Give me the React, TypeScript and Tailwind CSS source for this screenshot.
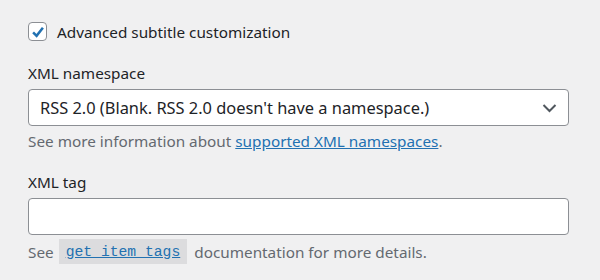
import React from 'react';

const App: React.FC = () => {
    return (
        <div className="w-[600px] h-[280px] bg-[#f0f0f1] px-[28px] pt-[22px] text-[#1d2327] font-['Noto_Sans',sans-serif] text-[15.3px] leading-[20px]">
            {/* checkbox row */}
            <label className="flex items-center gap-[10px] h-[19px]">
                <span className="w-[19px] h-[19px] rounded-[4px] border border-[#8c8f94] bg-white flex items-center justify-center">
                    <svg width="14" height="14" viewBox="0 0 20 20">
                        <path d="M3 10.5 L8 15.5 L17 4" fill="none" stroke="#2271b1" strokeWidth="3.6" />
                    </svg>
                </span>
                <span>Advanced subtitle customization</span>
            </label>

            {/* namespace select */}
            <div className="mt-[22px]">
                <div className="h-[22px]">XML namespace</div>
                <div className="mt-[4px] w-[541px] h-[37px] bg-white border border-[#8c8f94] rounded-[4px] flex items-center justify-between pl-[11px] pr-[11px]">
                    <span className="text-[16.4px]">RSS 2.0 (Blank. RSS 2.0 doesn't have a namespace.)</span>
                    <svg width="15" height="10" viewBox="0 0 15 10">
                        <path d="M1.5 2 L7.5 8 L13.5 2" fill="none" stroke="#50575e" strokeWidth="2" />
                    </svg>
                </div>
                <p className="mt-[5px] text-[#646970]">
                    See more information about <a className="text-[#2271b1] underline">supported XML namespaces</a>.
                </p>
            </div>

            {/* tag input */}
            <div className="mt-[21px]">
                <div className="h-[22px]">XML tag</div>
                <div className="mt-[4px] w-[541px] h-[37px] bg-white border border-[#8c8f94] rounded-[4px]" />
                <p className="mt-[4px] text-[#646970] flex items-center">
                    See
                    <code className="ml-[5px] mr-[7px] px-[7px] h-[25px] flex items-center bg-[#dcdcde] font-['Liberation_Mono',monospace] text-[14.7px] text-[#2271b1] underline">get_item_tags</code>
                    documentation for more details.
                </p>
            </div>
        </div>
    );
};

export default App;
